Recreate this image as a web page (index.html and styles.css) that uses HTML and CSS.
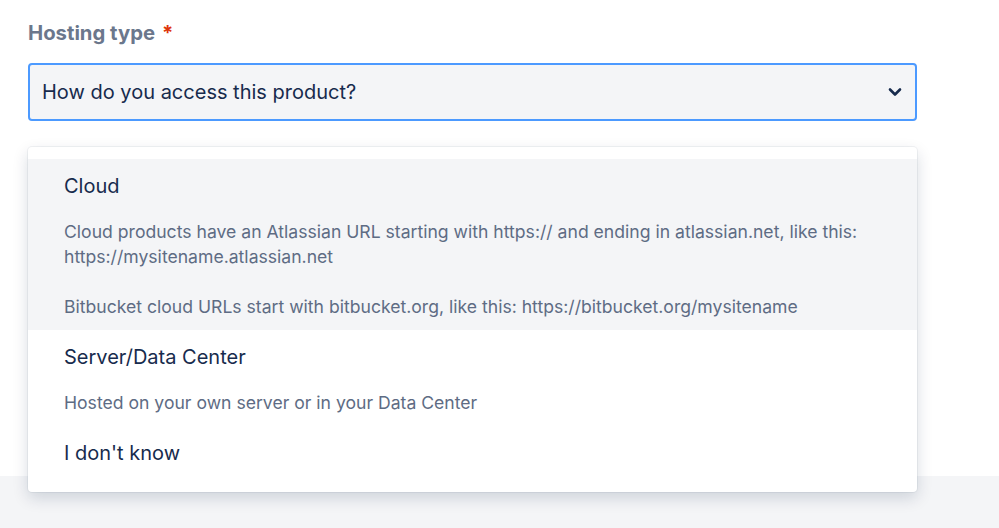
FILE: index.html
```html
<!DOCTYPE html>
<html lang="en">
<head>
<meta charset="utf-8">
<title>Hosting type</title>
<link rel="stylesheet" href="styles.css">
</head>
<body>
<main class="page">
  <div class="field">
    <label class="label">Hosting type <span class="req">*</span></label>
    <div class="select">
      <span class="select-text">How do you access this product?</span>
      <svg class="chevron" width="14" height="10" viewBox="0 0 14 10" aria-hidden="true">
        <path d="M2 2.5 L7 7.5 L12 2.5" fill="none" stroke="#172b4d" stroke-width="2.6" stroke-linecap="round" stroke-linejoin="round"/>
      </svg>
    </div>
    <div class="menu">
      <div class="option option-active">
        <div class="option-title">Cloud</div>
        <div class="option-desc">
          <p>Cloud products have an Atlassian URL starting with https:// and ending in atlassian.net, like this: https://mysitename.atlassian.net</p>
          <p>Bitbucket cloud URLs start with bitbucket.org, like this: https://bitbucket.org/mysitename</p>
        </div>
      </div>
      <div class="option">
        <div class="option-title">Server/Data Center</div>
        <div class="option-desc">
          <p>Hosted on your own server or in your Data Center</p>
        </div>
      </div>
      <div class="option">
        <div class="option-title">I don't know</div>
      </div>
    </div>
  </div>
</main>
<footer class="footer"></footer>
</body>
</html>
```

FILE: styles.css
```css
* { box-sizing: border-box; }
html, body { margin: 0; padding: 0; }
body {
  background: #ffffff;
  font-family: Inter, "Noto Sans", "Liberation Sans", sans-serif;
  color: #172b4d;
}
.page {
  height: 476px;
  padding: 21px 82px 0 28px;
}
.field {
  position: relative;
}
.label {
  display: block;
  font-size: 20.3px;
  line-height: 24px;
  font-weight: 700;
  color: #6b778c;
}
.req {
  color: #de350b;
  margin-left: 2px;
}
.select {
  margin-top: 18px;
  height: 58px;
  border: 2px solid #4c9aff;
  border-radius: 4px;
  background: #f4f5f7;
  display: flex;
  align-items: center;
  justify-content: space-between;
  padding: 0 13px 0 12px;
}
.select-text {
  font-size: 20px;
  line-height: 24px;
  color: #172b4d;
}
.chevron {
  display: block;
}
.menu {
  position: absolute;
  top: 126px;
  left: 0;
  right: 0;
  background: #ffffff;
  border-radius: 4px;
  padding: 12px 0 16px;
  box-shadow: 0 0 0 1px rgba(9, 30, 66, 0.05), 0 6px 16px rgba(9, 30, 66, 0.16);
  z-index: 2;
}
.option {
  padding: 15px 36px 11px;
}
.option-active {
  background: #f4f5f7;
}
.option-title {
  font-size: 20px;
  line-height: 24px;
  color: #172b4d;
}
.option-desc {
  margin-top: 21px;
  font-size: 17.6px;
  line-height: 25px;
  color: #5e6c84;
}
.option-desc p {
  margin: 0;
}
.option-desc p + p {
  margin-top: 25px;
}
.footer {
  height: 52px;
  background: #f4f5f7;
}
```
